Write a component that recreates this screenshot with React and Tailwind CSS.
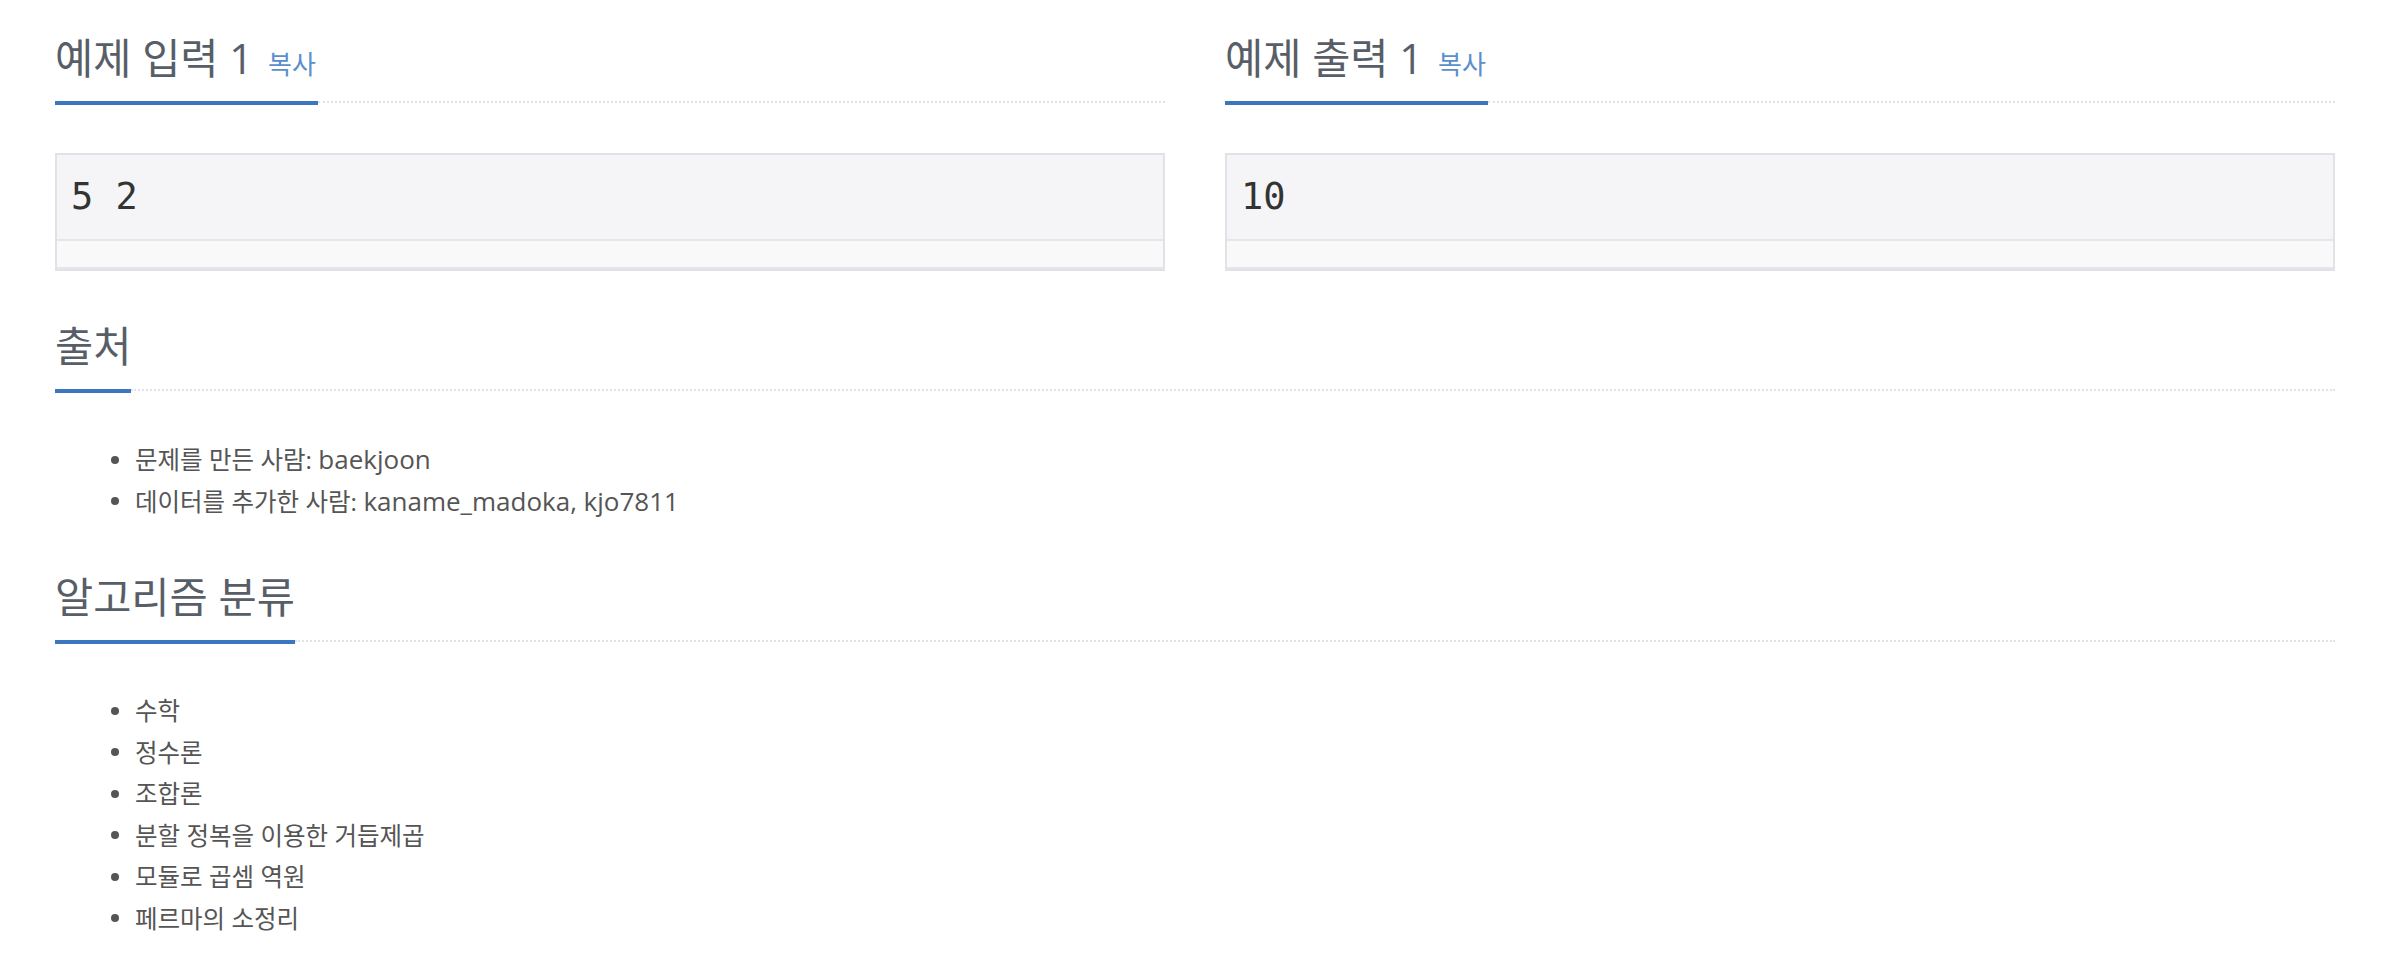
import React from "react";

const sources = [
  { label: "문제를 만든 사람:", names: "baekjoon" },
  { label: "데이터를 추가한 사람:", names: "kaname_madoka, kjo7811" },
];

const tags = [
  "수학",
  "정수론",
  "조합론",
  "분할 정복을 이용한 거듭제곱",
  "모듈로 곱셈 역원",
  "페르마의 소정리",
];

function Headline({ title, copy }) {
  return (
    <div className="flex">
      <div className="flex items-baseline border-b-4 border-[#3a77c0] pb-[14px]">
        <h2 className="text-[41.5px] leading-[57px] text-[#575e67] font-normal">{title}</h2>
        {copy && (
          <button className="ml-[15px] pr-[2px] text-[26px] leading-[30px] text-[#5b8fcc]">복사</button>
        )}
      </div>
      <div className="h-1 flex-1 self-end border-t-2 border-dotted border-[#dfe2e7]" />
    </div>
  );
}

function Sample({ title, value }) {
  return (
    <div>
      <Headline title={title} copy />
      <div className="mt-[48px] border-2 border-[#e1e1e8] bg-[#f5f5f7]">
        <pre className="px-[14px] py-4 font-['DejaVu_Sans_Mono',monospace] text-[37px] leading-[52px] text-[#333]">
          {value}
        </pre>
        <div className="h-[30px] border-y-2 border-[#e6e6ea] bg-[#f9f9fa]" />
      </div>
    </div>
  );
}

function Bullet({ children }) {
  return (
    <li className="flex items-center pl-[56px] text-[24.5px] leading-[41.5px] text-[#555]">
      <span className="h-[8px] w-[8px] shrink-0 rounded-full bg-[#555]" />
      <span className="ml-[16px]">{children}</span>
    </li>
  );
}

export default function App() {
  return (
    <div className="min-h-screen bg-white pl-[55px] pr-[61px] pt-[30px] font-['Open_Sans','Noto_Sans_CJK_KR',sans-serif]">
      {/* samples */}
      <div className="grid grid-cols-2 gap-[60px]">
        <Sample title="예제 입력 1" value="5 2" />
        <Sample title="예제 출력 1" value="10" />
      </div>

      {/* source */}
      <section className="mt-[47px]">
        <Headline title="출처" />
        <ul className="mt-[46px]">
          {sources.map((s) => (
            <Bullet key={s.label}>
              {s.label} <span className="text-[26px]">{s.names}</span>
            </Bullet>
          ))}
        </ul>
      </section>

      {/* algorithm tags */}
      <section className="mt-[47px]">
        <Headline title="알고리즘 분류" />
        <ul className="mt-[46px]">
          {tags.map((t) => (
            <Bullet key={t}>{t}</Bullet>
          ))}
        </ul>
      </section>
    </div>
  );
}
